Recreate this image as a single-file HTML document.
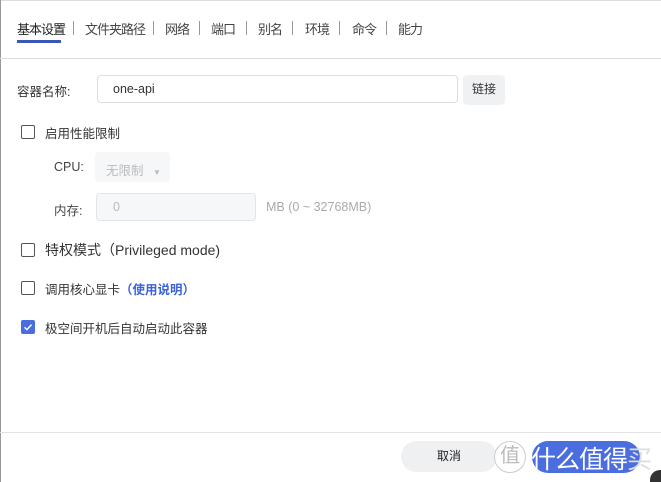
<!DOCTYPE html>
<html><head><meta charset="utf-8"><style>
*{margin:0;padding:0;box-sizing:border-box}
body{width:661px;height:482px;background:#fff;font-family:"Liberation Sans","Noto Sans CJK SC",sans-serif;font-size:12.5px;color:#333;position:relative;overflow:hidden}
.a{position:absolute;white-space:nowrap}
.tab{top:19px;font-size:13px;color:#444;letter-spacing:-1px}
.sep{top:21px;width:1px;height:14px;background:#999}
.cb{width:14px;height:14px;border:1.3px solid #555;border-radius:2px;left:21px}
</style></head><body>
<div class="a" style="left:0;top:0;width:661px;height:1px;background:#ddd"></div>
<div class="a" style="left:0;top:0;width:1px;height:482px;background:#999"></div>
<div class="a tab" style="left:17px;color:#222">基本设置</div>
<div class="a" style="left:17px;top:40px;width:44px;height:3px;background:#3b55b8"></div>
<div class="a sep" style="left:73px"></div>
<div class="a tab" style="left:85px">文件夹路径</div>
<div class="a sep" style="left:153px"></div>
<div class="a tab" style="left:165px">网络</div>
<div class="a sep" style="left:199px"></div>
<div class="a tab" style="left:211px">端口</div>
<div class="a sep" style="left:246px"></div>
<div class="a tab" style="left:258px">别名</div>
<div class="a sep" style="left:292px"></div>
<div class="a tab" style="left:305px">环境</div>
<div class="a sep" style="left:339px"></div>
<div class="a tab" style="left:352px">命令</div>
<div class="a sep" style="left:386px"></div>
<div class="a tab" style="left:398px">能力</div>
<div class="a" style="left:0;top:58px;width:661px;height:1px;background:#ddd"></div>

<div class="a" style="left:17px;top:81px">容器名称:</div>
<div class="a" style="left:97px;top:75px;width:361px;height:28px;border:1px solid #ddd;border-radius:4px;padding:6px 0 0 15px;color:#333">one-api</div>
<div class="a" style="left:463px;top:75px;width:42px;height:30px;background:#f0f1f3;border-radius:4px;font-size:12px;text-align:center;line-height:29px">链接</div>

<div class="a cb" style="top:125px"></div>
<div class="a" style="left:45px;top:123px">启用性能限制</div>
<div class="a" style="left:54px;top:160px;color:#444">CPU:</div>
<div class="a" style="left:95px;top:152px;width:75px;height:30px;background:#f6f7f8;border-radius:4px"></div>
<div class="a" style="left:106px;top:160px;color:#bbb">无限制 <span style="font-size:8px;margin-left:6px">▼</span></div>
<div class="a" style="left:54px;top:200px;color:#444">内存:</div>
<div class="a" style="left:96px;top:193px;width:160px;height:28px;background:#f6f7f8;border:1px solid #e3e4e6;border-radius:4px;padding:6px 0 0 16px;color:#bbb">0</div>
<div class="a" style="left:266px;top:200px;color:#aaa">MB (0 ~ 32768MB)</div>

<div class="a cb" style="top:243px"></div>
<div class="a" style="left:45px;top:240px;font-size:14px">特权模式（Privileged mode)</div>
<div class="a cb" style="top:281px"></div>
<div class="a" style="left:45px;top:279px">调用核心显卡<span style="color:#3a63d8;font-weight:bold">（使用说明）</span></div>
<div class="a" style="left:21px;top:320px;width:14px;height:14px;background:#4a6ee0;border-radius:2px"><svg width="14" height="14"><path d="M3.5 7.2l2.4 2.4 4.6-5" fill="none" stroke="#fff" stroke-width="1.4"/></svg></div>
<div class="a" style="left:45px;top:318px">极空间开机后自动启动此容器</div>

<div class="a" style="left:0;top:432px;width:661px;height:1px;background:#e3e3e3"></div>
<div class="a" style="left:401px;top:441px;width:96px;height:31px;background:#eff0f2;border-radius:16px;font-size:12px;text-align:center;line-height:31px;color:#222">取消</div>
<div class="a" style="left:494px;top:441px;width:32px;height:32px;border:1.5px solid #ccc;border-radius:50%;color:#bbb;font-size:20px;text-align:center;line-height:28px;background:rgba(255,255,255,.8)">值</div>
<div class="a" style="left:532px;top:441px;width:108px;height:32px;background:#4a6ee0;border-radius:16px"></div>
<div class="a" style="left:531px;top:440px;font-size:25px;color:#fff;letter-spacing:-1px">什么值得<span style="color:#ddd">买</span></div>
<div class="a" style="left:650px;top:470px;width:11px;height:12px;background:#333;border-top-left-radius:10px"></div>
</body></html>
